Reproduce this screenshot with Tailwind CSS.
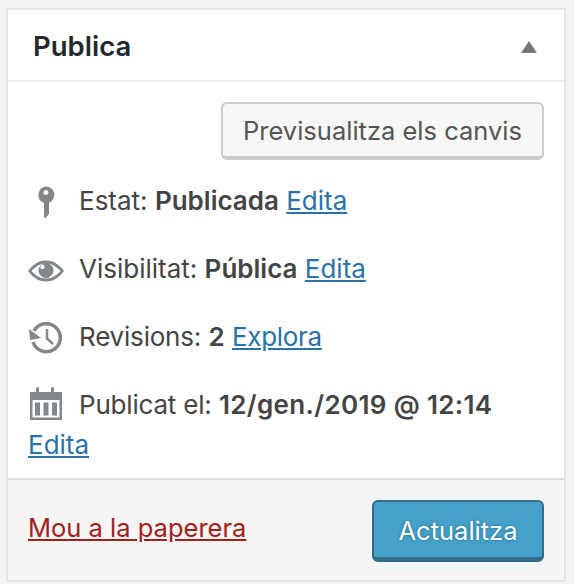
<!DOCTYPE html>
<html lang="en">
<head>
    <meta charset="UTF-8">
    <meta name="viewport" content="width=device-width, initial-scale=1.0">
    <script src="https://cdn.jsdelivr.net/npm/@tailwindcss/browser@4"></script>
    <title>Publica</title>
</head>
<body class="bg-[#f3f3f3] font-['Inter','Noto_Sans',sans-serif]">
    <div class="w-[574px] h-[584px] pt-2 pl-[6px] pr-2 overflow-hidden">
        <div class="border-2 border-[#e5e5e5] bg-white h-[574px] flex flex-col">
            <!-- header -->
            <div class="h-[72px] border-b-2 border-[#eeeeee] flex items-center justify-between pl-[25px] pr-[27px] shrink-0">
                <h2 class="text-[27.5px] leading-[40px] font-semibold text-[#23282d] pt-0.5">Publica</h2>
                <svg class="w-4 h-3 mt-1" viewBox="0 0 16 12"><path d="M8 0 L16 12 L0 12 Z" fill="#72777c"/></svg>
            </div>

            <div class="flex-1 text-[26px] leading-[40px] text-[#444444]">
                <div class="flex justify-end pt-5 pr-5">
                    <button class="h-[58px] w-[323px] bg-[#f7f7f7] border-2 border-[#cccccc] border-b-4 rounded-md text-[#555555] text-[25.5px] leading-[40px] pt-0.5">Previsualitza els canvis</button>
                </div>

                <div class="pt-[21px] pb-4 pl-5 pr-5">
                    <svg class="inline-block align-top w-[51px] h-10" viewBox="-1 0 51 40"><path fill-rule="evenodd" fill="#82878c" d="M17 5.500a8.500 8.500 0 0 1 3 16.400V33l-4 4.500L15 36V21.900A8.500 8.500 0 0 1 17 5.500ZM17 9a2.500 2.500 0 1 0 0 5 2.500 2.500 0 0 0 0-5Z"/></svg>Estat: <b class="font-semibold">Publicada</b> <a href="#" class="text-[#2a72a8] underline">Edita</a>
                </div>
                <div class="pt-3 pb-4 pl-5 pr-5">
                    <svg class="inline-block align-top w-[51px] h-10" viewBox="-1 0 51 40"><path fill-rule="evenodd" fill="#82878c" d="M17 11.500c8 0 14 5 18 10.500-4 5.500-10 10.500-18 10.500S3 27.500-1 22c4-5.500 10-10.500 18-10.500ZM17 14.500c-6 0-11 3.500-14.500 7.500C6 26 11 29.500 17 29.500S28 26 31.500 22C28 18 23 14.500 17 14.500Z"/><circle cx="17" cy="21.500" r="7.500" fill="#82878c"/><circle cx="13.500" cy="18" r="2.200" fill="#fff"/></svg>Visibilitat: <b class="font-semibold">Pública</b> <a href="#" class="text-[#2a72a8] underline">Edita</a>
                </div>
                <div class="pt-3 pb-4 pl-5 pr-5">
                    <svg class="inline-block align-top w-[51px] h-10" viewBox="-1 0 51 40"><path fill="none" stroke="#82878c" stroke-width="3.500" d="M5 14A14 14 0 1 1 4 25"/><path fill="#82878c" d="M0 12l1 11 11-2Z"/><path fill="none" stroke="#82878c" stroke-width="2.500" d="M18 12v9.500l6 5.500"/></svg><span class="tracking-[-0.2px]">Revisions:</span> <b class="font-semibold">2</b> <a href="#" class="text-[#2a72a8] underline tracking-[-0.3px]">Explora</a>
                </div>
                <div class="pt-3 pl-5 pr-5">
                    <svg class="inline-block align-top w-[51px] h-10" viewBox="-1 0 51 40"><path fill-rule="evenodd" fill="#82878c" d="M1 7h6V3.500a1.500 1.500 0 0 1 3 0V7h12V3.500a1.500 1.500 0 0 1 3 0V7h8v28H1ZM3.500 15v17.500h27V15ZM6 17.500h5v13H6ZM14.500 17.500h5v13h-5ZM23 17.500h5v13h-5Z"/></svg><span class="tracking-[-0.2px]">Publicat el:</span> <b class="font-semibold tracking-[0.35px]">12/gen./2019 @ 12:14</b><br>
                    <a href="#" class="text-[#2a72a8] underline">Edita</a>
                </div>
            </div>

            <!-- footer -->
            <div class="h-[102px] shrink-0 border-t-2 border-[#dddddd] bg-[#f5f5f5] flex items-center justify-between pl-5 pr-5 text-[25.5px]">
                <a href="#" class="text-[#a3201a] underline pb-1">Mou a la paperera</a>
                <button class="h-[62px] w-[172px] mt-px rounded-md bg-[#45a1c9] border-2 border-[#2f6d88] border-b-[5px] text-white text-[25.5px] pt-1 [text-shadow:0_0_3px_#1f6a8c]">Actualitza</button>
            </div>
        </div>
    </div>
</body>
</html>
